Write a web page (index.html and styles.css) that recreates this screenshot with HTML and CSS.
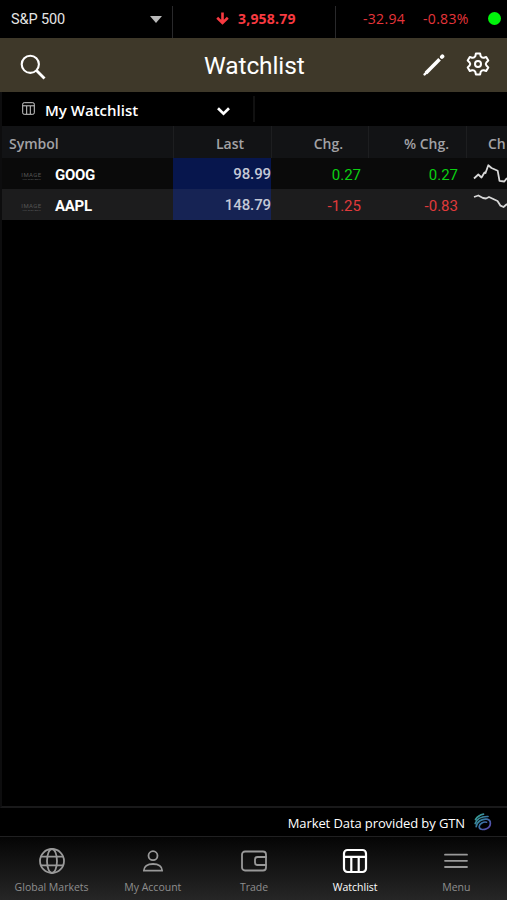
FILE: index.html
```html
<!DOCTYPE html>
<html lang="en">
<head>
  <meta charset="UTF-8">
  <meta name="viewport" content="width=device-width, initial-scale=1.0">
  <title>Watchlist</title>
  <link rel="stylesheet" href="styles.css">
</head>
<body>
  <div class="app">
    <div class="ticker">
      <div class="ticker-index">
        <span class="index-name">S&amp;P 500</span>
        <svg width="12" height="7" viewBox="0 0 12 7"><path d="M0 0h12L6 7z" fill="#b9b9b9"/></svg>
      </div>
      <div class="ticker-price">
        <svg width="13" height="13" viewBox="0 0 13 13" fill="none" stroke="#f83a41" stroke-width="2.6"><path d="M6.5 0.5v10M1.2 5.8l5.3 5.2 5.3-5.2"/></svg>
        <span class="index-price">3,958.79</span>
      </div>
      <div class="ticker-change">
        <span class="index-change">-32.94</span>
        <span class="index-percent">-0.83%</span>
        <span class="status"></span>
      </div>
    </div>

    <header class="header">
      <svg class="search" width="26" height="26" viewBox="0 0 26 26" fill="none" stroke="#fff" stroke-width="2.1"><circle cx="10.3" cy="10.3" r="8.6"/><path d="M16.5 16.5l8 8" stroke-width="2.8"/></svg>
      <h1>Watchlist</h1>
      <svg class="edit" width="22" height="22" viewBox="0 0 22 22" fill="none" stroke="#fff" stroke-linecap="round"><path d="M3 18.9L16.6 5.3" stroke-width="3.6" stroke-linecap="butt"/><path d="M1.6 20.4l1.8-1.7" stroke-width="2.4"/><path d="M18.900 2.900l0.500-0.500" stroke-width="3.900"/></svg>
      <svg class="settings" width="24" height="24" viewBox="0 0 24 24" fill="none" stroke="#fff" stroke-width="2" stroke-linejoin="round"><path d="M9.900 1.500h4.200l0.600 2.700q1.300 2.100 3.200 1.500l2.300-0.700 2.100 3.600-1.900 1.800q-1.300 1.600 0 3.200l1.900 1.800-2.100 3.600-2.300-0.700q-1.900-0.600-3.200 1.500l-0.600 2.700H9.900l-0.600-2.700q-1.300-2.100-3.200-1.500l-2.300 0.700-2.100-3.600 1.900-1.800q1.300-1.600 0-3.200L1.700 8.600l2.100-3.600 2.300 0.700q1.900 0.600 3.200-1.500z"/><circle cx="12" cy="12" r="3"/></svg>
    </header>

    <div class="tabs">
      <div class="tab">
        <svg class="tab-icon" width="13" height="13" viewBox="0 0 13 13" fill="none" stroke="#ccc"><rect x="0.7" y="0.7" width="11.6" height="11.6" rx="1.5"/><path d="M1 3.800h11M4.700 4v8M8.300 4v8"/></svg>
        <span class="tab-name">My Watchlist</span>
        <svg class="tab-arrow" width="13" height="9" viewBox="0 0 13 9" fill="none" stroke="#fff" stroke-width="2.7"><path d="M1 1.300l5.500 5.400L12 1.300"/></svg>
      </div>
    </div>

    <main class="list">
      <div class="row head">
        <div class="symbol">Symbol</div>
        <div class="last">Last</div>
        <div class="chg">Chg.</div>
        <div class="pct">% Chg.</div>
        <div class="chart">Ch</div>
      </div>
      <div class="row up">
        <div class="symbol"><span class="thumb">IMAGE<small>NOT AVAILABLE</small></span><b>GOOG</b></div>
        <div class="last">98.99</div>
        <div class="chg">0.27</div>
        <div class="pct">0.27</div>
        <div class="chart"><svg width="41" height="31" viewBox="0 0 41 31"><path d="M8 20.500L12.300 16.500 15.500 19.500 18.500 14.500 19.500 15 22.300 7.300 25.500 10 31.700 12.800 33.500 22.800 38.300 23.500 41 20"/></svg></div>
      </div>
      <div class="row down">
        <div class="symbol"><span class="thumb">IMAGE<small>NOT AVAILABLE</small></span><b>AAPL</b></div>
        <div class="last">148.79</div>
        <div class="chg">-1.25</div>
        <div class="pct">-0.83</div>
        <div class="chart"><svg width="41" height="31" viewBox="0 0 41 31"><path d="M8 8L12.300 6.500 17 9 20 9.500 23 8 31.500 12 34.500 16.700 37.500 18 41 15"/></svg></div>
      </div>
    </main>

    <div class="provider">
      <span>Market Data provided by GTN</span>
      <svg width="18" height="18" viewBox="0 0 18 18" fill="none" stroke="url(#gtn)" stroke-width="1.700" stroke-linecap="round">
        <defs><linearGradient id="gtn" x1="0" y1="0" x2="1" y2="1"><stop offset="0" stop-color="#3aab91"/><stop offset="0.500" stop-color="#3974a5"/><stop offset="1" stop-color="#6242b0"/></linearGradient></defs>
        <path d="M1.500 6.500C3.500 3.500 6 1.800 9.500 1.200M1.200 10.500C3 5.500 8 3.300 14 3.500M2.200 13.700C3 8.500 8 5.500 13 6.200c4.800 1 4.300 7.500-0.500 9.500-3.600 1.500-7.500 0.800-7.300-2.200 0.300-3 4.300-5.100 7.300-4.300"/>
      </svg>
    </div>

    <nav class="nav">
      <div class="nav-item markets">
        <svg width="28" height="28" viewBox="0 0 28 28"><circle cx="14" cy="14" r="12"/><ellipse cx="14" cy="14" rx="5" ry="12"/><path d="M3.200 9.700h21.600M3.200 18.300h21.600"/></svg>
        <span>Global Markets</span>
      </div>
      <div class="nav-item account">
        <svg width="28" height="28" viewBox="0 0 28 28"><circle cx="14" cy="8.700" r="4.500"/><path d="M4.800 23.700c0-4 3.700-6.700 9.200-6.700s9.200 2.700 9.200 6.700z"/></svg>
        <span>My Account</span>
      </div>
      <div class="nav-item trade">
        <svg width="28" height="28" viewBox="0 0 28 28"><rect x="2" y="4.500" width="24" height="19" rx="3"/><path d="M26 10H17.500q-2.500 0-2.500 2.500v3q0 2.500 2.500 2.500H26"/></svg>
        <span>Trade</span>
      </div>
      <div class="nav-item watchlist active">
        <svg width="28" height="28" viewBox="0 0 28 28"><rect x="3" y="3" width="22" height="22" rx="3.500"/><path d="M3 9.800h22M10.300 10v15M17.700 10v15"/></svg>
        <span>Watchlist</span>
      </div>
      <div class="nav-item menu">
        <svg width="28" height="28" viewBox="0 0 28 28"><path d="M3 7.700h22M3 13.800h22M3 20h22"/></svg>
        <span>Menu</span>
      </div>
    </nav>
  </div>
</body>
</html>
```
FILE: styles.css
```css
* {
  box-sizing: border-box;
}
body {
  margin: 0;
  background: #000;
  color: #fff;
  font-family: "Open Sans", "Noto Sans", sans-serif;
}
svg {
  display: block;
  flex-shrink: 0;
}
.app {
  width: 507px;
  height: 900px;
  display: flex;
  flex-direction: column;
  overflow: hidden;
}

/* index ticker */
.ticker {
  height: 38px;
  display: flex;
  padding-top: 6px;
}
.ticker-index {
  width: 173px;
  padding: 0 10px 6px 11px;
  display: flex;
  align-items: center;
  justify-content: space-between;
  border-right: 1px solid #29292b;
}
.ticker-index svg {
  margin-top: 1px;
}
.index-name {
  font: 14.5px Roboto, sans-serif;
  letter-spacing: -0.1px;
  color: #e4e4e4;
}
.ticker-price {
  width: 163px;
  padding: 0 0 7px 43px;
  display: flex;
  align-items: center;
  gap: 9px;
  border-right: 1px solid #29292b;
}
.index-price {
  font-size: 14px;
  font-weight: 700;
  letter-spacing: 0.2px;
  color: #f83a41;
}
.ticker-change {
  flex: 1;
  padding: 0 6px 7px 27px;
  display: flex;
  align-items: center;
  color: #e6353b;
  font-size: 14px;
  letter-spacing: 0.3px;
}
.index-percent {
  margin-left: 18px;
}
.status {
  width: 13px;
  height: 13px;
  margin-left: auto;
  border-radius: 50%;
  background: #00f50b;
}

/* title bar */
.header {
  height: 54px;
  padding: 0 17px 0 20px;
  display: flex;
  align-items: center;
  background: #3e3829;
}
.header h1 {
  margin: 0 0 0 158px;
  width: 102px;
  font: 24.5px Roboto, sans-serif;
  letter-spacing: -0.1px;
  white-space: nowrap;
}
.search {
  margin-top: 4px;
}
.edit {
  margin-left: 117px;
}
.settings {
  margin: -2px 0 0 auto;
}

/* watchlist tabs */
.tabs {
  height: 34px;
  padding-top: 4px;
  border-left: 2px solid #0d0d0e;
}
.tab {
  width: 253px;
  height: 26px;
  padding: 0 23px 0 20px;
  display: flex;
  align-items: center;
  border-right: 2px solid #111;
}
.tab-icon {
  margin-top: -1px;
}
.tab-name {
  margin-left: 10px;
  padding-top: 2px;
  font-size: 15px;
  font-weight: 600;
}
.tab-arrow {
  margin: 5px 0 0 auto;
}

/* quote table */
.list {
  flex: 1;
  border-left: 2px solid #0d0d0e;
  border-bottom: 2px solid #19191a;
  overflow: hidden;
}
.row {
  display: grid;
  grid-template-columns: 171px 98px 97px 98px 41px;
  height: 31px;
  align-items: stretch;
  line-height: 31px;
  background: #0a0a0a;
  font-family: Roboto, sans-serif;
  font-size: 15px;
}
.row > div {
  text-align: right;
  overflow: hidden;
}
.row .chg,
.row .pct {
  padding: 2px 8px 0 0;
}
.row .chg {
  padding-right: 7px;
}
.head {
  height: 32px;
  line-height: 35px;
  background: #121315;
  color: #a2a2a5;
  font-family: "Open Sans", "Noto Sans", sans-serif;
  font-size: 14px;
  font-weight: 600;
}
.head > div + div {
  border-left: 1px solid #1d1e20;
}
.head .symbol {
  padding-left: 7px;
  text-align: left;
}
.head .last {
  padding-right: 27px;
}
.head .chg {
  padding: 0 25px 0 0;
}
.head .pct {
  padding: 0 17px 0 0;
}
.head .chart {
  padding-left: 21px;
  text-align: left;
}
.up .symbol,
.down .symbol {
  display: flex;
  align-items: center;
  padding: 3px 0 0 19px;
}
.row b {
  margin-left: 13px;
  font-size: 15px;
  letter-spacing: -0.3px;
}
.thumb {
  width: 21px;
  padding-top: 2px;
  color: #555;
  font-size: 6px;
  line-height: 6px;
  letter-spacing: 0.400px;
  text-align: center;
}
.thumb small {
  display: block;
  font-size: 2.500px;
  line-height: 3px;
  letter-spacing: 0;
}
.up .last,
.down .last {
  padding-top: 1px;
  background: #07164d;
  color: #c4c8d6;
  font-weight: 500;
  letter-spacing: -0.1px;
}
.up .chg,
.up .pct {
  color: #0bd012;
}
.down {
  background: #1c1c1d;
}
.down .last {
  background: #162354;
}
.down .chg,
.down .pct {
  color: #e03a3b;
}
.chart path {
  fill: none;
  stroke: #d8d8d8;
  stroke-width: 1.800;
  stroke-linejoin: round;
}

/* data provider line */
.provider {
  height: 28px;
  padding: 0 15px 0 0;
  display: flex;
  align-items: center;
  justify-content: flex-end;
  gap: 9px;
  font-size: 13px;
  letter-spacing: -0.1px;
}
.provider span {
  padding-top: 1px;
}

/* bottom navigation */
.nav {
  height: 64px;
  display: grid;
  grid-template-columns: repeat(5, 1fr);
  padding: 10px 0 0 1px;
  border-top: 1px solid #202021;
  background: linear-gradient(#050505, #262626);
}
.nav-item {
  display: flex;
  flex-direction: column;
  align-items: center;
  gap: 4px;
  color: #8e8e8e;
  font-size: 10.500px;
  line-height: 16px;
  white-space: nowrap;
}
.nav-item svg {
  fill: none;
  stroke: #999;
  stroke-width: 1.800;
  stroke-linecap: round;
  stroke-linejoin: round;
}
.nav-item.active {
  color: #fff;
}
.nav-item.active svg {
  stroke: #fff;
  stroke-width: 2.200;
}
```
